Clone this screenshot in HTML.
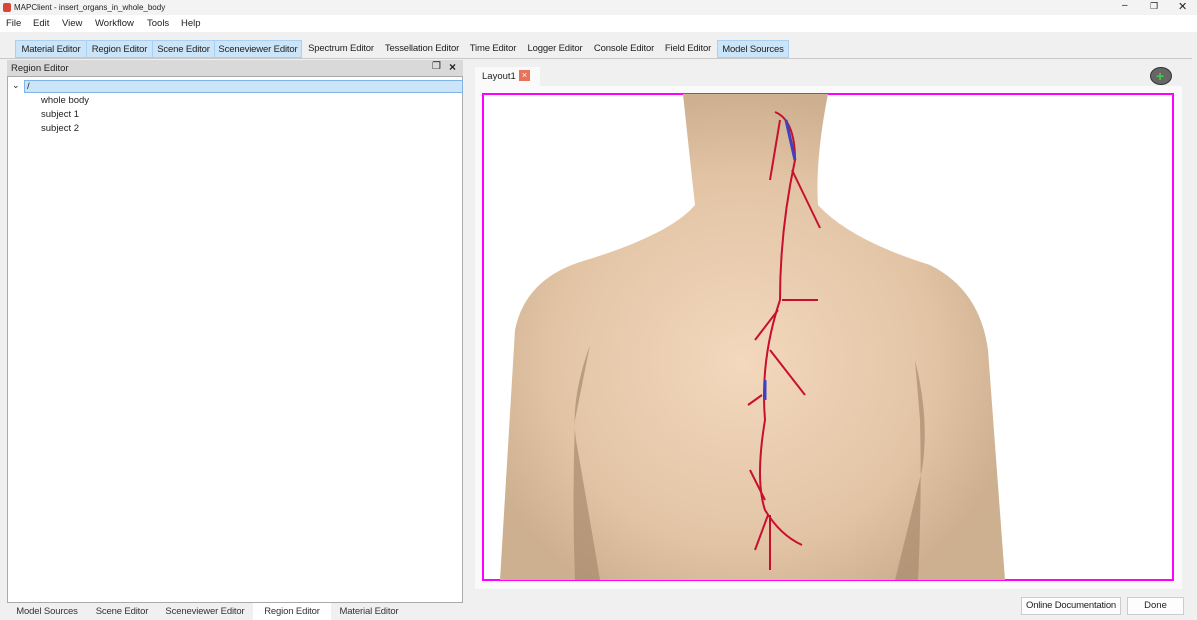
<!DOCTYPE html>
<html><head><meta charset="utf-8"><style>
*{box-sizing:border-box;margin:0;padding:0}
html,body{width:1197px;height:620px}
body{background:#f0f0f0;font-family:"Liberation Sans",sans-serif;font-size:9.5px;color:#222;position:relative;overflow:hidden;white-space:nowrap}
.abs{position:absolute}
.title{top:0;left:0;width:1197px;height:15px;background:#f3f3f3}
.menu{top:15px;left:0;width:1197px;height:17px;background:#fff}
.menu span{position:absolute;top:3px;font-size:9.5px}
.tb span{position:absolute;top:40px;height:18px;line-height:17px;font-size:9.5px;white-space:nowrap;text-align:center;letter-spacing:-0.15px}
.tb span.on{background:#cce4f7;border:1px solid #a9d0f0}
.bt span{position:absolute;top:603px;height:17px;line-height:17px;font-size:9.5px;text-align:center;color:#333;letter-spacing:-0.15px}
</style></head><body>
<div class="abs title"><div class="abs" style="left:3px;top:3px;width:8px;height:9px;background:#d9443a;border-radius:2px"></div><span class="abs" style="left:14px;top:3px;font-size:8px">MAPClient - insert_organs_in_whole_body</span>
<span class="abs" style="left:1122px;top:0;font-size:10px">–</span><span class="abs" style="left:1150px;top:1px;font-size:9px">❐</span><span class="abs" style="left:1178px;top:0;font-size:11px">✕</span></div>
<div class="abs menu"><span style="left:6px">File</span><span style="left:33px">Edit</span><span style="left:62px">View</span><span style="left:95px">Workflow</span><span style="left:147px">Tools</span><span style="left:181px">Help</span></div>
<div class="tb">
<span class="on" style="left:15px;width:72px">Material Editor</span>
<span class="on" style="left:86px;width:67px">Region Editor</span>
<span class="on" style="left:152px;width:63px">Scene Editor</span>
<span class="on" style="left:214px;width:88px">Sceneviewer Editor</span>
<span style="left:303px;width:76px">Spectrum Editor</span>
<span style="left:380px;width:84px">Tessellation Editor</span>
<span style="left:465px;width:56px">Time Editor</span>
<span style="left:522px;width:66px">Logger Editor</span>
<span style="left:589px;width:70px">Console Editor</span>
<span style="left:660px;width:56px">Field Editor</span>
<span class="on" style="left:717px;width:72px">Model Sources</span>
</div>
<div class="abs" style="left:0;top:58px;width:1192px;height:1px;background:#c8c8c8"></div>
<div class="abs" style="left:7px;top:60px;width:456px;height:16px;background:#d9d9d9"><span class="abs" style="left:4px;top:3px">Region Editor</span><span class="abs" style="left:425px;top:1px;font-size:10px">❐</span><span class="abs" style="left:442px;top:0;font-size:12px;font-weight:bold">×</span></div>
<div class="abs" style="left:7px;top:76px;width:456px;height:527px;background:#fff;border:1px solid #aaa">
<span class="abs" style="left:4px;top:3px;font-size:9px">⌄</span>
<div class="abs" style="left:16px;top:3px;width:439px;height:13px;background:#cce4f7;border:1px solid #7eb4ea;padding-left:2px;line-height:11px">/</div>
<span class="abs" style="left:33px;top:18px">whole body</span>
<span class="abs" style="left:33px;top:32px">subject 1</span>
<span class="abs" style="left:33px;top:46px">subject 2</span>
</div>
<div class="bt">
<span style="left:7px;width:80px">Model Sources</span>
<span style="left:87px;width:70px">Scene Editor</span>
<span style="left:157px;width:96px">Sceneviewer Editor</span>
<span style="left:253px;width:78px;background:#fff">Region Editor</span>
<span style="left:331px;width:76px">Material Editor</span>
</div>
<div class="abs" style="left:475px;top:67px;width:65px;height:19px;background:#fafafa"><span class="abs" style="left:7px;top:4px">Layout1</span><span class="abs" style="left:44px;top:3px;width:11px;height:11px;background:#e8735a;color:#fff;font-size:9px;line-height:11px;text-align:center">×</span></div>
<div class="abs" style="left:1150px;top:67px;width:22px;height:18px;border-radius:50%;background:#666;border:1px solid #333"><span class="abs" style="left:5px;top:0;color:#4c4;font-weight:bold;font-size:14px;line-height:16px">+</span></div>
<div class="abs" style="left:475px;top:86px;width:707px;height:503px;background:#fafafa"></div>
<svg class="abs" style="left:0;top:0" width="1197" height="620">
<defs><radialGradient id="g" cx="0.48" cy="0.55" r="0.55"><stop offset="0" stop-color="#f3d8bd"/><stop offset="0.7" stop-color="#e2c4a5"/><stop offset="1" stop-color="#cdb090"/></radialGradient></defs>
<rect x="483" y="94" width="690" height="486" fill="#fff" stroke="#ff00ff" stroke-width="2"/>
<path d="M683 94 L828 94 Q815 160 818 205 Q850 240 930 265 Q980 290 988 350 L1005 580 L500 580 L515 330 Q525 280 580 262 Q670 235 695 205 Q690 160 683 94Z" fill="url(#g)"/>
<path d="M590 345 Q570 400 576 440 Q590 520 600 580 L575 580 Q572 500 575 420Z" fill="#a88a6c" opacity="0.7"/>
<path d="M915 360 Q930 420 922 470 Q905 540 895 580 L918 580 Q922 500 920 420Z" fill="#a88a6c" opacity="0.7"/>
<g stroke="#c8102e" stroke-width="2" fill="none">
<path d="M775 112 Q795 120 795 160 Q780 230 780 300 Q760 360 765 420 Q755 480 765 510 Q780 535 802 545"/>
<path d="M780 120 L770 180 M792 170 L820 228 M782 300 L818 300 M778 310 L755 340 M770 350 L805 395 M762 395 L748 405 M765 500 L750 470 M770 515 L770 570 M768 515 L755 550"/>
</g>
<path d="M786 120 L795 160 M765 380 L765 400" stroke="#4040c0" stroke-width="3"/>
</svg>
<div class="abs" style="left:1021px;top:597px;width:100px;height:18px;background:#fdfdfd;border:1px solid #ccc;text-align:center;line-height:16px;letter-spacing:-0.2px">Online Documentation</div>
<div class="abs" style="left:1127px;top:597px;width:57px;height:18px;background:#fdfdfd;border:1px solid #ccc;text-align:center;line-height:16px">Done</div>
</body></html>
